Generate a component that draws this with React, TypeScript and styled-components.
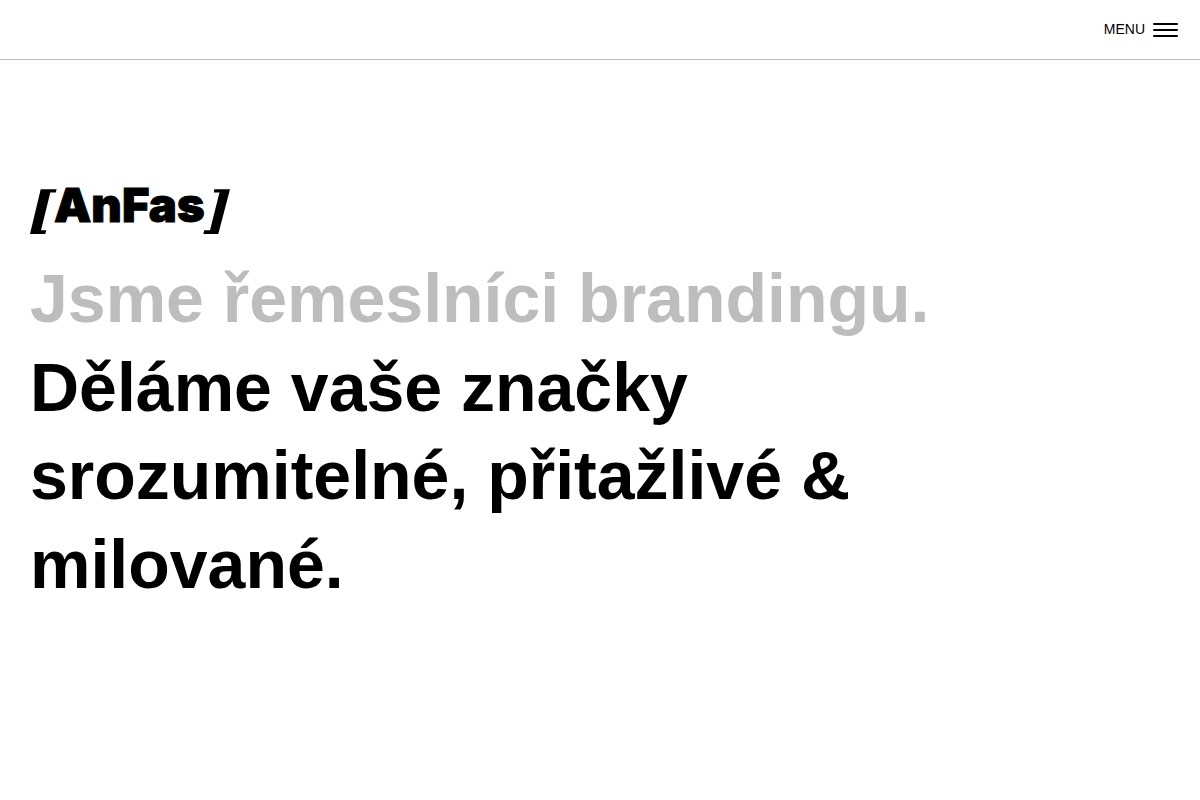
import styled, { createGlobalStyle } from "styled-components";

const GlobalStyle = createGlobalStyle`
  *, *::before, *::after {
    box-sizing: border-box;
  }

  body {
    margin: 0;
    background: #fff;
    color: #000;
    font-family: "Liberation Sans", Arial, Helvetica, sans-serif;
  }
`;

const Header = styled.header`
  display: flex;
  align-items: center;
  justify-content: flex-end;
  height: 60px;
  padding: 0 22px;
  border-bottom: 1px solid #bdbdbd;
`;

const MenuButton = styled.button`
  display: flex;
  align-items: center;
  gap: 8px;
  padding: 0;
  border: 0;
  background: none;
  color: inherit;
  font: inherit;
  font-size: 14px;
  line-height: 17px;
  text-transform: uppercase;
  cursor: pointer;
`;

const Burger = styled.span`
  display: flex;
  flex-direction: column;
  gap: 4px;
  width: 25px;
`;

const BurgerBar = styled.span`
  height: 2px;
  border-radius: 1px;
  background: currentColor;
`;

const Hero = styled.main`
  padding: 126px 30px 60px;
`;

const LogoLink = styled.a`
  display: block;
  width: 200px;
  color: inherit;
`;

const LogoMark = styled.svg`
  display: block;
  width: 100%;
  height: auto;
  overflow: visible;
`;

const Wordmark = styled.text`
  font-family: Inter, sans-serif;
  font-size: 47px;
  font-weight: 900;
  stroke: currentColor;
  stroke-width: 1px;
`;

const Title = styled.h1`
  max-width: 1000px;
  margin: 19px 0 0;
  font-size: 68px;
  font-weight: 700;
  line-height: 1.3;
`;

const Lead = styled.span`
  display: block;
  color: #bdbdbd;
  line-height: 89px;
`;

function Logo() {
  return (
    <LogoMark viewBox="0 0 200 49" fill="currentColor" role="img" aria-label="AnFas">
      <path d="M10.700 3.300H26.700L25.700 6.500H20.300L11 44.300H16.300L15.300 48H0Z" />
      <Wordmark x="24" y="36">AnFas</Wordmark>
      <path d="M184.300 3.300H200L188.300 48H173.300L174.300 44.300H180L189.500 6.500H183.800Z" />
    </LogoMark>
  );
}

export default function App() {
  return (
    <>
      <GlobalStyle />
      <Header>
        <MenuButton type="button">
          Menu
          <Burger aria-hidden="true">
            <BurgerBar />
            <BurgerBar />
            <BurgerBar />
          </Burger>
        </MenuButton>
      </Header>
      <Hero>
        <LogoLink href="/">
          <Logo />
        </LogoLink>
        <Title>
          <Lead>Jsme řemeslníci brandingu.</Lead>
          Děláme vaše značky srozumitelné, přitažlivé &amp; milované.
        </Title>
      </Hero>
    </>
  );
}
